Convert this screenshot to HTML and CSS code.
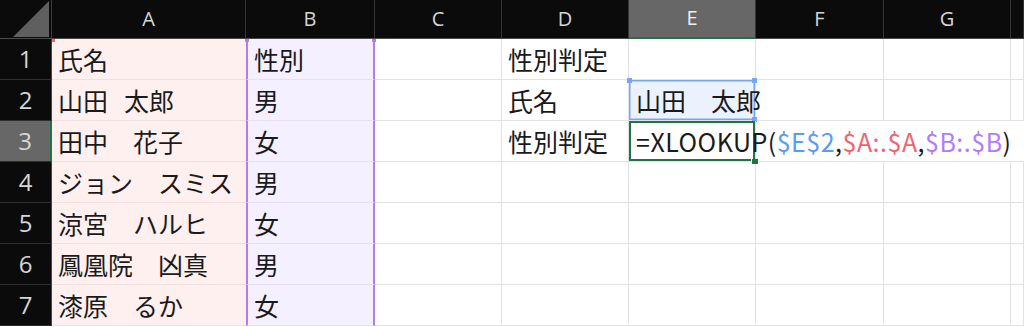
FILE: index.html
```html
<!DOCTYPE html>
<html lang="ja">
<head>
<meta charset="utf-8">
<link rel="stylesheet" href="styles.css">
</head>
<body>
<div class="sheet">
  <div class="corner"><div class="tri"></div></div>
  <div class="hdr">A</div>
  <div class="hdr">B</div>
  <div class="hdr">C</div>
  <div class="hdr">D</div>
  <div class="hdr hdr-sel">E</div>
  <div class="hdr">F</div>
  <div class="hdr">G</div>
  <div class="hdr"></div>

  <div class="rowhdr">1</div>
  <div class="cell col-a a-top">氏名</div>
  <div class="cell col-b b-top">性別</div>
  <div class="cell"></div>
  <div class="cell">性別判定</div>
  <div class="cell"></div>
  <div class="cell"></div>
  <div class="cell"></div>
  <div class="cell"></div>

  <div class="rowhdr">2</div>
  <div class="cell col-a">山田<span class="sp-half"> </span>太郎</div>
  <div class="cell col-b">男</div>
  <div class="cell"></div>
  <div class="cell">氏名</div>
  <div class="cell ref-cell"><span class="ref-text">山田　太郎</span><i class="h h-tl"></i><i class="h h-tr"></i><i class="h h-br"></i></div>
  <div class="cell"></div>
  <div class="cell"></div>
  <div class="cell"></div>

  <div class="rowhdr rowhdr-sel">3</div>
  <div class="cell col-a">田中　花子</div>
  <div class="cell col-b">女</div>
  <div class="cell"></div>
  <div class="cell">性別判定</div>
  <div class="cell active-cell"><span class="formula">=XLOOKUP(<span class="f-blue">$E$2</span>,<span class="f-red">$A:.$A</span>,<span class="f-purple">$B:.$B</span>)</span><i class="fill-handle"></i></div>
  <div class="cell spill"></div>
  <div class="cell spill"></div>
  <div class="cell spill"></div>

  <div class="rowhdr">4</div>
  <div class="cell col-a">ジョン　スミス</div>
  <div class="cell col-b">男</div>
  <div class="cell"></div>
  <div class="cell"></div>
  <div class="cell"></div>
  <div class="cell"></div>
  <div class="cell"></div>
  <div class="cell"></div>

  <div class="rowhdr">5</div>
  <div class="cell col-a">涼宮　ハルヒ</div>
  <div class="cell col-b">女</div>
  <div class="cell"></div>
  <div class="cell"></div>
  <div class="cell"></div>
  <div class="cell"></div>
  <div class="cell"></div>
  <div class="cell"></div>

  <div class="rowhdr">6</div>
  <div class="cell col-a">鳳凰院　凶真</div>
  <div class="cell col-b">男</div>
  <div class="cell"></div>
  <div class="cell"></div>
  <div class="cell"></div>
  <div class="cell"></div>
  <div class="cell"></div>
  <div class="cell"></div>

  <div class="rowhdr">7</div>
  <div class="cell col-a">漆原　るか</div>
  <div class="cell col-b">女</div>
  <div class="cell"></div>
  <div class="cell"></div>
  <div class="cell"></div>
  <div class="cell"></div>
  <div class="cell"></div>
  <div class="cell"></div>
</div>
</body>
</html>
```

FILE: styles.css
```css
* { box-sizing: border-box; }
html, body { margin: 0; padding: 0; background: #ffffff; }
body {
  width: 1024px;
  height: 327px;
  overflow: hidden;
  font-family: "Noto Sans CJK JP", "Noto Sans", sans-serif;
}
.sheet {
  display: grid;
  grid-template-columns: 52px 194px 129px 127px 127px 127px 128px 127px 13px;
  grid-template-rows: 39px repeat(7, 41px);
  width: 1024px;
  overflow: hidden;
}
.corner {
  background: #0b0b0b;
  border-right: 1px solid #3c3c3c;
  border-bottom: 1px solid #4a4a4a;
  position: relative;
}
.tri {
  position: absolute;
  right: 2px;
  bottom: 1px;
  width: 36px;
  height: 36px;
  background: #5f5f5f;
  clip-path: polygon(100% 0, 100% 100%, 0 100%);
}
.hdr {
  background: #0b0b0b;
  color: #d6d6d6;
  border-right: 1px solid #363636;
  border-bottom: 1px solid #4a4a4a;
  font-family: "Open Sans", "Noto Sans", sans-serif;
  font-size: 20px;
  display: flex;
  align-items: center;
  justify-content: center;
  padding-bottom: 2px;
}
.hdr-sel {
  background: #676767;
  color: #f0f0f0;
  border-bottom: 2px solid #217346;
}
.rowhdr {
  background: #0b0b0b;
  color: #d6d6d6;
  border-right: 1px solid #444444;
  border-bottom: 1px solid #2e2e2e;
  font-family: "Open Sans", "Noto Sans", sans-serif;
  font-size: 24px;
  display: flex;
  align-items: center;
  justify-content: center;
  padding-bottom: 2px;
}
.rowhdr-sel {
  background: #676767;
  border-right: 2px solid #217346;
}
.cell {
  position: relative;
  border-right: 1px solid #e2e2e2;
  border-bottom: 1px solid #e2e2e2;
  font-size: 25px;
  color: #1a1a1a;
  display: flex;
  align-items: center;
  padding-left: 6px;
  white-space: nowrap;
  line-height: 1;
}
.col-a {
  background: #fff0f0;
  border-right: none;
  border-bottom-color: #f1dede;
}
.col-b {
  background: #f5f0ff;
  border-bottom-color: #e6def5;
  border-left: 2px solid #b27cf7;
  border-right: 2px solid #b27cf7;
  padding-left: 6px;
}
.a-top::before {
  content: "";
  position: absolute;
  left: 0;
  top: 0;
  width: 3px;
  height: 3px;
  background: #f2636e;
}
.b-top::before,
.b-top::after {
  content: "";
  position: absolute;
  top: 0;
  width: 4px;
  height: 3px;
  background: #b27cf7;
}
.b-top::before { left: -3px; }
.b-top::after { right: -3px; }
.sp-half { display: inline-block; width: 16px; }
.ref-cell {
  background: #ebf2fd;
  box-shadow: inset 0 0 0 1.5px #78a6f2;
  padding-left: 7px;
  overflow: visible;
  z-index: 2;
}
.ref-text { position: relative; }
.h {
  position: absolute;
  width: 5px;
  height: 5px;
  background: #78a6f2;
}
.h-tl { left: -2px; top: -2px; }
.h-tr { right: -2px; top: -2px; }
.h-br { right: -2px; bottom: -2px; }
.active-cell {
  box-shadow: inset 0 0 0 2px #217346;
  padding-left: 7px;
  overflow: visible;
  z-index: 3;
  background: transparent;
}
.formula {
  position: relative;
  color: #1a1a1a;
  letter-spacing: 0.5px;
}
.f-blue { color: #5b9bf8; }
.f-red { color: #f2636e; }
.f-purple { color: #b27cf7; }
.fill-handle {
  position: absolute;
  right: -3px;
  bottom: -3px;
  width: 7px;
  height: 5px;
  background: #217346;
  border-left: 1px solid #ffffff;
}
.spill {
  border-right-color: transparent;
  background: transparent;
}
```
